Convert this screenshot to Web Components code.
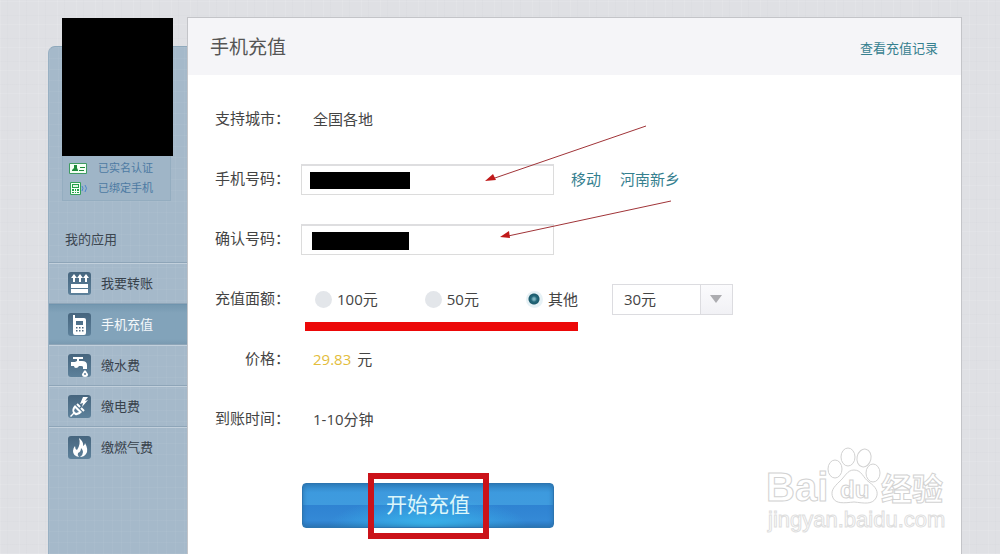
<!DOCTYPE html>
<html lang="zh-CN">
<head>
<meta charset="utf-8">
<meta name="viewport" content="width=device-width, initial-scale=1">
<title>手机充值</title>
<style>
    body {
        margin: 0;
        font-family: "Open Sans", "Noto Sans CJK SC", sans-serif;
        color: #444;
        background-color: #dfe0e4;
        background-image:
            repeating-linear-gradient(90deg, rgba(255,255,255,.10) 0 1px, transparent 1px 7px, rgba(160,165,175,.04) 7px 8px, transparent 8px 19px),
            repeating-linear-gradient(0deg, rgba(255,255,255,.10) 0 1px, transparent 1px 9px, rgba(160,165,175,.04) 9px 10px, transparent 10px 23px);
    }
</style>
</head>
<body>
<recharge-page>
    <side-bar slot="side">
        <user-card slot="user"></user-card>
        <nav-item icon="transfer">我要转账</nav-item>
        <nav-item icon="phone" active>手机充值</nav-item>
        <nav-item icon="water">缴水费</nav-item>
        <nav-item icon="power">缴电费</nav-item>
        <nav-item icon="gas">缴燃气费</nav-item>
    </side-bar>
    <main-panel>
        <span slot="title">手机充值</span>
        <span slot="more">查看充值记录</span>
        <recharge-form></recharge-form>
    </main-panel>
</recharge-page>

<script>
// page: sidebar + panel
var template_page = document.createElement("template");
template_page.innerHTML = `
<style>
    :host {
        display: flex;
        box-sizing: border-box;
        min-height: 100vh;
        padding: 17px 38px 0 48px;
    }
    .side {
        flex: none;
        display: flex;
        width: 139px;
        padding-top: 29px;
    }
    .main {
        flex: 1;
        display: flex;
        min-width: 0;
    }
</style>
<div class="side"><slot name="side"></slot></div>
<div class="main"><slot></slot></div>
`;

class RechargePage extends HTMLElement {
    constructor(){
        super();
        this.attachShadow({mode:"open"}).appendChild(template_page.content.cloneNode(true));
    }
}
customElements.define("recharge-page", RechargePage);

// blue sidebar
var template_side = document.createElement("template");
template_side.innerHTML = `
<style>
    :host {
        display: block;
        flex: 1;
        box-sizing: border-box;
        border-top: 1px solid #8fa9bc;
        border-left: 1px solid #98b0c3;
        border-radius: 7px 0 0 0;
        background-color: #a5b9ca;
        background-image:
            repeating-linear-gradient(90deg, rgba(255,255,255,.04) 0 1px, transparent 1px 9px),
            repeating-linear-gradient(0deg, rgba(255,255,255,.04) 0 1px, transparent 1px 11px);
    }
    h2 {
        margin: 0;
        padding: 27px 0 13px 16px;
        font-size: 13px;
        line-height: 22px;
        font-weight: normal;
        color: #3c4650;
    }
    nav {
        display: flex;
        flex-direction: column;
    }
</style>
<slot name="user"></slot>
<h2>我的应用</h2>
<nav><slot></slot></nav>
`;

class SideBar extends HTMLElement {
    constructor(){
        super();
        this.attachShadow({mode:"open"}).appendChild(template_side.content.cloneNode(true));
    }
}
customElements.define("side-bar", SideBar);

// avatar and the two verified badges
var template_user = document.createElement("template");
template_user.innerHTML = `
<style>
    :host {
        display: block;
        margin: -29px 14px 0 13px;
    }
    .avatar {
        height: 138px;
        background: #000;
    }
    ul {
        display: flex;
        flex-direction: column;
        gap: 2px;
        margin: 0 2px 0 0;
        padding: 3px 0;
        list-style: none;
        border: 1px solid #94adc0;
        border-top: 0;
        background: #9fb5c7;
    }
    li {
        display: flex;
        align-items: center;
        gap: 8px;
        padding-left: 6px;
        font-size: 11px;
        line-height: 18px;
        color: #4d7aa3;
    }
    svg {
        flex: none;
        width: 21px;
        height: 13px;
    }
</style>
<div class="avatar"></div>
<ul>
    <li>
        <svg viewBox="0 0 21 13" aria-hidden="true">
            <path d="M.5 1.5h17v10h-17z" fill="#f4fff4" stroke="#3f9a62"/>
            <path d="M5 3h3v3L9 8v1H3V8l2-2zM11 5h5v1h-5zM10 8h5v1h-5z" fill="#1e8a3a"/>
        </svg>
        已实名认证
    </li>
    <li>
        <svg viewBox="0 0 21 13" aria-hidden="true">
            <path d="M1.5.5h10v12h-10z" fill="#f4fff4" stroke="#35a05a"/>
            <path d="M3 2h7v4H3zM3 7h2v2H3zM6 7h1v2H6zM8 7h2v2H8zM3 10h2v1H3zM6 10h1v1H6zM8 10h2v1H8z" fill="#22a04a"/>
            <path d="M4 3h5v2H4z" fill="#dff5e2"/>
            <path d="M13 4q2 2 0 5M16 3q3 3 0 7" fill="none" stroke="#4a86cf"/>
        </svg>
        已绑定手机
    </li>
</ul>
`;

class UserCard extends HTMLElement {
    constructor(){
        super();
        this.attachShadow({mode:"open"}).appendChild(template_user.content.cloneNode(true));
    }
}
customElements.define("user-card", UserCard);

// one entry of the menu, icon picked by attribute
var navIcons = {
    transfer: `<path d="M3 12h17v4H3zM3 17h17v4H3z"/><path d="M3 6l3-4 3 4H7v4H5V6zM9 6l3-4 3 4h-2v4h-2V6zM15 6l3-4 3 4h-2v4h-2V6z"/>`,
    phone: `<path fill-rule="evenodd" d="M5 2h2v3h9q2 0 2 2v13q0 2-2 2H7q-2 0-2-2zM8 8v4h7V8z"/><path fill="#4c6880" d="M8 14h1.500v1.500H8zM11 14h1.500v1.500H11zM14 14h1.500v1.500H14zM8 17h1.500v1.500H8zM11 17h1.500v1.500H11zM14 17h1.500v1.500H14z"/>`,
    water: `<path d="M5 3h10v2h-4v2h3q5 0 5 4v4h-4v-2q0-1-2-1h-2q-1 2-3 2-2 0-2-2H3V8h4l2-1V5H5z"/><path d="M17 16q3 3.500 3 4.500a3 2.500 0 0 1-6 0Q14 19.500 17 16z"/><circle cx="17" cy="20" r="1" fill="#5b7d98"/>`,
    power: `<path d="M15 2l-3 7 3-1-1 4 6-7-3 1 3-4z"/><path d="M7 10l7 7q-3 4-7 3l-1-1-3 3-1-1 3-3q-2-4 2-8z"/><path d="M9 9l3 3M13 13l3 3" stroke="#fff" stroke-width="2"/><path d="M7 13l4 4-3 1-2-2z" fill="#5b7d98"/>`,
    gas: `<path d="M11 2q5 4 4 8 2-1 2-3 4 7 1 11-2 3-6 3 3-2 3-5 0-2-2-4 0 4-3 5-1 2 1 4-6-1-6-6 0-3 2-5 0 3 2 4 4-6 2-12z"/>`
};

var template_item = document.createElement("template");
template_item.innerHTML = `
<style>
    :host {
        display: block;
        border-top: 1px solid #c2d0dc;
        box-shadow: 0 -1px #8ea5b8;
    }
    :host([active]) {
        border-top-color: #6f94ae;
        background: linear-gradient(#7598b0, #82a3ba 20%, #82a3ba 85%, #7898af);
    }
    a {
        display: flex;
        align-items: center;
        gap: 10px;
        height: 38px;
        padding: 0 0 2px 19px;
        font-size: 13px;
        line-height: 18px;
        color: #38424c;
        text-decoration: none;
    }
    :host([active]) a { color: #f4f8fa; }
    svg {
        width: 23px;
        height: 23px;
        border-radius: 3px;
        background: linear-gradient(#46657e, #5d819b);
        fill: #fff;
    }
</style>
<a href="#"><svg viewBox="0 0 23 23" aria-hidden="true"></svg><span><slot></slot></span></a>
`;

class NavItem extends HTMLElement {
    constructor(){
        super();
        this.attachShadow({mode:"open"});
    }
    connectedCallback(){
        this.shadowRoot.appendChild(template_item.content.cloneNode(true));
        this.shadowRoot.querySelector("svg").innerHTML = navIcons[this.getAttribute("icon")];
    }
}
customElements.define("nav-item", NavItem);

// white panel with the grey head
var template_panel = document.createElement("template");
template_panel.innerHTML = `
<style>
    :host {
        display: block;
        position: relative;
        flex: 1;
        min-width: 0;
        border: 1px solid #c3c4c8;
        border-bottom: 0;
        background: #fff;
    }
    header {
        display: flex;
        align-items: center;
        justify-content: space-between;
        height: 57px;
        padding: 0 23px 0 22px;
        background: #f5f5f8;
    }
    h1 {
        margin: 0;
        padding-bottom: 2px;
        font-size: 19px;
        font-weight: normal;
        color: #555;
    }
    a {
        padding-top: 2px;
        font-size: 13px;
        color: #35808f;
        text-decoration: none;
    }
    water-mark {
        position: absolute;
        right: 10px;
        bottom: 14px;
    }
</style>
<header>
    <h1><slot name="title"></slot></h1>
    <a href="#"><slot name="more"></slot></a>
</header>
<slot></slot>
<water-mark></water-mark>
`;

class MainPanel extends HTMLElement {
    constructor(){
        super();
        this.attachShadow({mode:"open"}).appendChild(template_panel.content.cloneNode(true));
    }
}
customElements.define("main-panel", MainPanel);

// label on the left, anything on the right
var template_row = document.createElement("template");
template_row.innerHTML = `
<style>
    :host {
        display: flex;
        align-items: center;
        gap: 11px;
        height: 60px;
    }
    .label {
        width: 75px;
        padding-bottom: 2px;
        text-align: right;
        white-space: nowrap;
    }
    .field {
        display: flex;
        align-items: center;
    }
    :host([plain]) .field { padding-left: 12px; }
</style>
<div class="label"><slot name="label"></slot></div>
<div class="field"><slot></slot></div>
`;

class FormRow extends HTMLElement {
    constructor(){
        super();
        this.attachShadow({mode:"open"}).appendChild(template_row.content.cloneNode(true));
    }
}
customElements.define("form-row", FormRow);

var template_form = document.createElement("template");
template_form.innerHTML = `
<style>
    :host { display: block; }
    form {
        padding: 14px 27px 26px;
        font-size: 15px;
        line-height: 22px;
    }
    input[type=tel] {
        box-sizing: border-box;
        width: 253px;
        height: 31px;
        padding: 0 8px;
        border: 1px solid #dcdcdc;
        border-top: 2px solid #dedee0;
        font: inherit;
        background: linear-gradient(#000, #000) 8px 6px / 100px 17px no-repeat #fff;
    }
    #again {
        background-position: 10px 6px;
        background-size: 97px 18px;
    }
    .place {
        display: flex;
        gap: 19px;
        margin-left: 17px;
    }
    .place a {
        color: #35808f;
        text-decoration: none;
    }
    .amounts {
        position: relative;
        display: flex;
        gap: 47px;
        padding-left: 14px;
    }
    .amounts label {
        display: flex;
        align-items: center;
        gap: 5px;
    }
    /* red underline over the row's lower edge */
    .amounts::after {
        content: "";
        position: absolute;
        left: 4px;
        right: 0;
        top: 34px;
        height: 9px;
        background: #ec0808;
    }
    input[type=radio] {
        appearance: none;
        width: 17px;
        height: 17px;
        margin: 0;
        border-radius: 50%;
        background: #e3e6ea;
    }
    input[type=radio]:checked {
        background: radial-gradient(circle at 8px 8px, #7fb5c2 0 1px, #23687a 3px, #1d5c6e 5px, #e6f1f5 6px);
    }
    select {
        appearance: none;
        box-sizing: border-box;
        width: 121px;
        height: 31px;
        margin-left: 34px;
        padding: 0 11px;
        border: 1px solid #dcdce0;
        border-radius: 0;
        font: inherit;
        color: #444;
        background:
            url("data:image/svg+xml,%3Csvg xmlns='http://www.w3.org/2000/svg' width='12' height='8'%3E%3Cpath d='M0 0h12L6 8z' fill='%23acacb0'/%3E%3C/svg%3E") right 10px center no-repeat,
            linear-gradient(#dcdce0, #dcdce0) right 31px top / 1px 100% no-repeat,
            linear-gradient(#fbfbfd, #f1f1f5) right / 31px 100% no-repeat #fff;
    }
    .price { color: #e3bd3c; margin-right: 6px; }
    .action {
        position: relative;
        width: 252px;
        margin: 34px 0 0 87px;
    }
    .action::after {
        content: "";
        position: absolute;
        inset: -10px 65px -11px 66px;
        border: 6px solid #cb1219;
        pointer-events: none;
    }
    button {
        display: block;
        width: 100%;
        height: 45px;
        padding: 0 0 4px;
        border: 1px solid #2c75b0;
        border-radius: 4px;
        font: inherit;
        font-size: 21px;
        color: #dcf6fa;
        background:
            radial-gradient(ellipse 100px 30px at 50% 100%, rgba(60,200,245,.75), transparent),
            linear-gradient(#3184c4, #3d9ade 20%, #3f9bde 49%, #2f83d2 50%, #3489d6 85%, #2c78bd);
        box-shadow: inset 0 0 5px #2a72ae;
    }
    .arrows {
        position: absolute;
        left: 296px;
        top: 102px;
        width: 190px;
        height: 125px;
        pointer-events: none;
    }
</style>
<form>
    <form-row plain><span slot="label">支持城市：</span>全国各地</form-row>
    <form-row>
        <label slot="label" for="phone">手机号码：</label>
        <input type="tel" id="phone">
        <span class="place"><a href="#">移动</a><a href="#">河南新乡</a></span>
    </form-row>
    <form-row>
        <label slot="label" for="again">确认号码：</label>
        <input type="tel" id="again">
    </form-row>
    <form-row>
        <span slot="label">充值面额：</span>
        <div class="amounts">
            <label><input type="radio" name="amount">100元</label>
            <label><input type="radio" name="amount">50元</label>
            <label><input type="radio" name="amount" checked>其他</label>
        </div>
        <select aria-label="其他面额"><option>30元</option></select>
    </form-row>
    <form-row plain><span slot="label">价格：</span><span class="price">29.83</span>元</form-row>
    <form-row plain><span slot="label">到账时间：</span>1-10分钟</form-row>
    <div class="action"><button type="button">开始充值</button></div>
</form>
<svg class="arrows" viewBox="0 0 190 125" aria-hidden="true">
    <path d="M162 6L8 59M187 81L24 116" fill="none" stroke="#a03438"/>
    <path d="M1 61l8-7 3 6zM16 117l9-6 1 7z" fill="#c01a1a"/>
</svg>
`;

class RechargeForm extends HTMLElement {
    constructor(){
        super();
        this.attachShadow({mode:"open"}).appendChild(template_form.content.cloneNode(true));
    }
}
customElements.define("recharge-form", RechargeForm);

// outlined logo in the corner
var template_mark = document.createElement("template");
template_mark.innerHTML = `
<style>
    :host { display: block; pointer-events: none; }
    svg {
        display: block;
        width: 190px;
        height: 100px;
        fill: #fff;
        stroke: #d2d2d2;
        stroke-width: 1;
    }
    text { font-family: "Liberation Sans", "Noto Sans CJK SC", sans-serif; }
    .bold { font-weight: bold; }
    .url { stroke: #dedede; }
</style>
<svg viewBox="0 0 190 100">
    <text class="bold" x="5" y="61" font-size="40">Bai</text>
    <ellipse cx="74" cy="29" rx="7" ry="9"/>
    <ellipse cx="87" cy="17" rx="7" ry="9"/>
    <ellipse cx="103" cy="18" rx="7" ry="9" transform="rotate(12 103 18)"/>
    <ellipse cx="112" cy="33" rx="7" ry="9"/>
    <path d="M93 30c8 0 9 8 15 12 7 5 10 10 7 16-4 7-12 5-22 4-10 1-18 2-21-4-3-7 1-11 6-16 6-5 8-12 15-12z"/>
    <text class="bold" x="79" y="58" font-size="24">du</text>
    <text class="bold" x="120" y="60" font-size="31">经验</text>
    <text class="url" x="7" y="87" font-size="22">jingyan.baidu.com</text>
</svg>
`;

class WaterMark extends HTMLElement {
    constructor(){
        super();
        this.attachShadow({mode:"open"}).appendChild(template_mark.content.cloneNode(true));
    }
}
customElements.define("water-mark", WaterMark);
</script>
</body>
</html>
